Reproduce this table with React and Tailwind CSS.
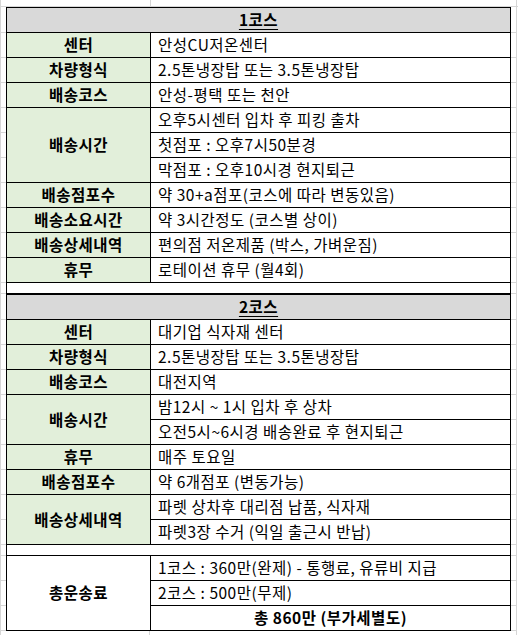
import React from 'react';

const course1 = [
  { label: '센터', values: ['안성CU저온센터'] },
  { label: '차량형식', values: ['2.5톤냉장탑 또는 3.5톤냉장탑'] },
  { label: '배송코스', values: ['안성-평택 또는 천안'] },
  { label: '배송시간', values: ['오후5시센터 입차 후 피킹 출차', '첫점포 : 오후7시50분경', '막점포 : 오후10시경 현지퇴근'] },
  { label: '배송점포수', values: ['약 30+a점포(코스에 따라 변동있음)'] },
  { label: '배송소요시간', values: ['약 3시간정도 (코스별 상이)'] },
  { label: '배송상세내역', values: ['편의점 저온제품 (박스, 가벼운짐)'] },
  { label: '휴무', values: ['로테이션 휴무 (월4회)'] },
];

const course2 = [
  { label: '센터', values: ['대기업 식자재 센터'] },
  { label: '차량형식', values: ['2.5톤냉장탑 또는 3.5톤냉장탑'] },
  { label: '배송코스', values: ['대전지역'] },
  { label: '배송시간', values: ['밤12시 ~ 1시 입차 후 상차', '오전5시~6시경 배송완료 후 현지퇴근'] },
  { label: '휴무', values: ['매주 토요일'] },
  { label: '배송점포수', values: ['약 6개점포 (변동가능)'] },
  { label: '배송상세내역', values: ['파렛 상차후 대리점 납품, 식자재', '파렛3장 수거 (익일 출근시 반납)'] },
];

// spreadsheet gutter columns on both sides of the table
const Row = ({ heights, children }) => (
  <div className="flex">
    <div className="flex w-[5px] shrink-0 flex-col">
      {heights.map((h, i) => (
        <div key={i} className={`${h} border-b border-[#d6d6d6]`} />
      ))}
    </div>
    {children}
    <div className="flex w-[6px] shrink-0 flex-col border-r border-[#d6d6d6]">
      {heights.map((h, i) => (
        <div key={i} className={`${h} border-b border-[#d6d6d6]`} />
      ))}
    </div>
  </div>
);

const Header = ({ title }) => (
  <Row heights={['h-[26px]']}>
    <div className="flex h-[26px] w-[505px] shrink-0 items-center justify-center border border-black bg-[#d9d9d9] font-bold underline underline-offset-[3px]">
      {title}
    </div>
  </Row>
);

const Spacer = () => (
  <Row heights={['h-[11px]']}>
    <div className="h-[11px] w-[505px] shrink-0 border-x border-b border-black" />
  </Row>
);

const Group = ({ label, values, plain, lastBold }) => (
  <Row heights={values.map(() => 'h-[25px]')}>
    <div className="flex w-[505px] shrink-0 border-x border-b border-black">
      <div className={`flex w-[144px] shrink-0 items-center justify-center border-r border-black font-bold ${plain ? 'bg-white' : 'bg-[#e2efda]'}`}>
        {label}
      </div>
      <div className="flex flex-1 flex-col">
        {values.map((v, i) => {
          const last = i === values.length - 1;
          return (
            <div
              key={i}
              className={`flex items-center whitespace-nowrap ${last ? 'h-[24px]' : 'h-[25px] border-b border-black'} ${last && lastBold ? 'justify-center font-bold' : 'pl-[7px]'}`}
            >
              {v}
            </div>
          );
        })}
      </div>
    </div>
  </Row>
);

export default function App() {
  return (
    <div className="h-[635px] w-[518px] overflow-hidden border-l border-[#d6d6d6] bg-white font-['Noto_Sans_CJK_KR','Noto_Sans',sans-serif] text-[15.5px] leading-none tracking-[0.5px] text-black">
      {/* top strip */}
      <div className="flex h-[7px] border-b border-[#d6d6d6]">
        <div className="w-[150px] shrink-0 border-r border-[#d6d6d6]" />
        <div className="w-[360px] shrink-0" />
        <div className="w-[6px] shrink-0 border-r border-[#d6d6d6]" />
      </div>

      <Header title="1코스" />
      {course1.map((g) => (
        <Group key={g.label} {...g} />
      ))}
      <Spacer />

      <Header title="2코스" />
      {course2.map((g) => (
        <Group key={g.label} {...g} />
      ))}
      <Spacer />

      <Group
        label="총운송료"
        plain
        lastBold
        values={['1코스 : 360만(완제) - 통행료, 유류비 지급', '2코스 : 500만(무제)', '총 860만 (부가세별도)']}
      />

      {/* bottom strip */}
      <div className="flex h-[6px]">
        <div className="w-[149px] shrink-0 border-r border-[#d6d6d6]" />
        <div className="w-[361px] shrink-0" />
        <div className="w-[6px] shrink-0 border-r border-[#d6d6d6]" />
      </div>
    </div>
  );
}
